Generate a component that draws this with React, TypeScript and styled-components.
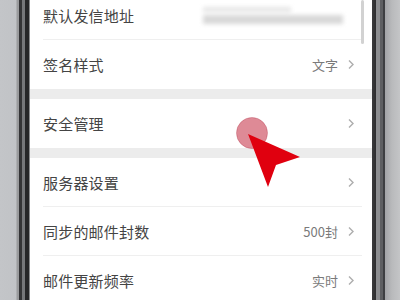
import React from "react";
import styled, { createGlobalStyle } from "styled-components";

const Global = createGlobalStyle`
  html, body { margin: 0; padding: 0; background: #c2c4c7; }
  body { font-family: "Noto Sans CJK SC", "Noto Sans", sans-serif; }
`;

const Stage = styled.div`
  width: 400px;
  height: 300px;
  display: flex;
  overflow: hidden;
  position: relative;
`;

const LeftEdge = styled.div`
  width: 30px;
  flex: none;
  background: linear-gradient(
    to right,
    #c3c5c8 0px, #c1c3c6 16px,
    #9a9b9d 17px, #9a9b9d 19px,
    #343436 19px, #343436 22px,
    #76777a 22px, #76777a 25px,
    #262628 25px, #262628 29px,
    #8a8b8d 29px, #8a8b8d 30px
  );
`;

const RightEdge = styled.div`
  flex: 1;
  background: linear-gradient(
    to right,
    #3a3a3c 0px, #2c2c2e 4px,
    #8c8d90 4px, #8c8d90 8px,
    #5e5f62 8px, #5e5f62 11px,
    #3e3f42 11px, #3e3f42 13px,
    #a3a4a7 13px, #b9babc 20px, #c4c5c7 28px
  );
`;

const Screen = styled.div`
  width: 342px;
  flex: none;
  background: #ececec;
  position: relative;
  overflow: hidden;
`;

const List = styled.div`
  margin-top: -9px;
  display: flex;
  flex-direction: column;
`;

const Group = styled.div<{ $gap?: boolean }>`
  background: #ffffff;
  margin-bottom: ${(p) => (p.$gap ? "10px" : "0")};
`;

const Row = styled.div<{ $divider?: boolean }>`
  height: 49px;
  display: flex;
  align-items: center;
  padding: 0 17px 0 13px;
  position: relative;
  box-sizing: border-box;
  border-bottom: ${(p) => (p.$divider ? "1px solid transparent" : "none")};
  &::after {
    content: "";
    display: ${(p) => (p.$divider ? "block" : "none")};
    position: absolute;
    left: 13px;
    right: 10px;
    bottom: -1px;
    height: 1px;
    background: #efefef;
  }
`;

const Label = styled.span`
  font-size: 15px;
  color: #444444;
  flex: 1;
  letter-spacing: 0.2px;
`;

const Value = styled.span`
  font-size: 13px;
  color: #7a7a7a;
  margin-right: 9px;
`;

const Blurred = styled.div`
  width: 140px;
  height: 22px;
  position: relative;
  margin-right: 12px;
  filter: blur(2px);
`;

const BlurLine = styled.div<{ $w: number; $top: number; $h: number; $c: string }>`
  position: absolute;
  left: 0;
  top: ${(p) => p.$top}px;
  width: ${(p) => p.$w}px;
  height: ${(p) => p.$h}px;
  background: ${(p) => p.$c};
`;

const ScrollBar = styled.div`
  position: absolute;
  right: 8px;
  top: 0;
  width: 3px;
  height: 44px;
  background: #d2d2d2;
  border-radius: 2px;
`;

const Cursor = styled.svg`
  position: absolute;
  left: 205px;
  top: 116px;
  width: 70px;
  height: 75px;
`;

const Chevron = () => (
  <svg width="8" height="11" viewBox="0 0 8 11">
    <path d="M2 1.5 L6 5.5 L2 9.5" fill="none" stroke="#adadad" strokeWidth="1.4" />
  </svg>
);

export default function App() {
  return (
    <>
      <Global />
      <Stage>
        <LeftEdge />
        <Screen>
          <List>
            <Group $gap>
              <Row $divider>
                <Label>默认发信地址</Label>
                <Blurred>
                  <BlurLine $top={3} $w={88} $h={5} $c="#e6e6e6" />
                  <BlurLine $top={11} $w={140} $h={9} $c="#d8d8d8" />
                </Blurred>
              </Row>
              <Row>
                <Label>签名样式</Label>
                <Value>文字</Value>
                <Chevron />
              </Row>
            </Group>
            <Group $gap>
              <Row>
                <Label>安全管理</Label>
                <Chevron />
              </Row>
            </Group>
            <Group>
              <Row $divider>
                <Label>服务器设置</Label>
                <Chevron />
              </Row>
              <Row $divider>
                <Label>同步的邮件封数</Label>
                <Value>500封</Value>
                <Chevron />
              </Row>
              <Row>
                <Label>邮件更新频率</Label>
                <Value>实时</Value>
                <Chevron />
              </Row>
            </Group>
          </List>
          <ScrollBar />
          <Cursor viewBox="0 0 70 75">
            <circle cx="17" cy="17" r="15.5" fill="rgba(200,60,80,0.6)" stroke="rgba(180,60,80,0.35)" strokeWidth="1" />
            <path d="M13 18 L65 41 L41 49 L33 71 Z" fill="#e0000f" />
          </Cursor>
        </Screen>
        <RightEdge />
      </Stage>
    </>
  );
}
